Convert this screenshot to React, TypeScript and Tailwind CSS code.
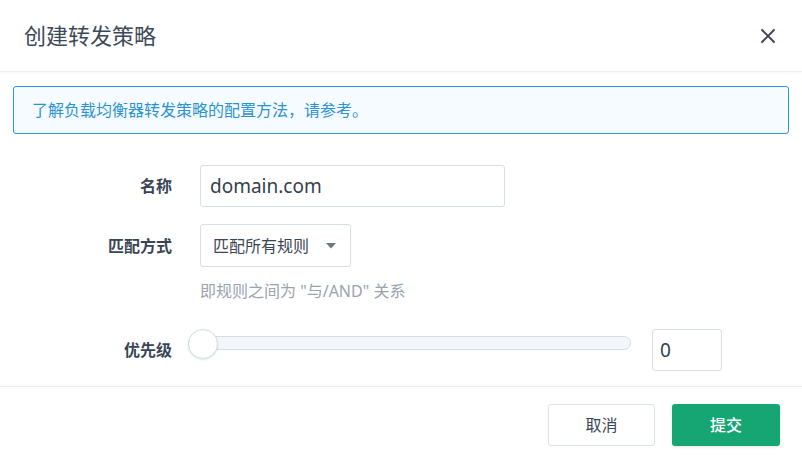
import React from 'react'

const FONT = { fontFamily: '"Noto Sans", "Noto Sans CJK SC", sans-serif' }

function CloseIcon() {
  return (
    <svg width="16" height="16" viewBox="0 0 16 16" fill="none">
      <path d="M2 2 L14 14 M14 2 L2 14" stroke="#3b4757" strokeWidth="1.9" strokeLinecap="round" />
    </svg>
  )
}

function Label({ children }: { children: React.ReactNode }) {
  return (
    <div className="flex h-[42px] w-[159px] shrink-0 items-center justify-end text-[16px] font-bold text-[#394555]">
      {children}
    </div>
  )
}

export default function App() {
  return (
    <div className="flex h-[459px] w-[802px] flex-col bg-white" style={FONT}>
      {/* Header */}
      <div className="relative z-10 flex h-[72px] shrink-0 items-center justify-between border-b border-[#eceff2] pl-6 pr-[26px] shadow-[0_1px_3px_rgba(0,0,0,0.04)]">
        <h1 className="text-[22px] font-normal text-[#3d4959]">创建转发策略</h1>
        <CloseIcon />
      </div>

      <div className="px-[13px]">
        {/* Info */}
        <div className="mt-[14px] flex h-[48px] items-center rounded-[3px] border border-[#2a9ae0] bg-[#f5fbff] px-[18px] text-[16px] text-[#2b93d4]">
          了解负载均衡器转发策略的配置方法，请参考。
        </div>

        {/* Form */}
        <div className="mt-[31px]">
          <div className="flex items-center">
            <Label>名称</Label>
            <div className="ml-[28px] flex h-[42px] w-[305px] items-center rounded-[3px] border border-[#d6dee7] pl-[9px] text-[19px] text-[#333f4d]">
              domain.com
            </div>
          </div>

          <div className="mt-[17px] flex items-center">
            <Label>匹配方式</Label>
            <div className="ml-[28px] flex h-[43px] w-[151px] items-center justify-between rounded-[3px] border border-[#d6dee7] pl-[12px] pr-[14px] text-[16px] text-[#3a4655]">
              <span>匹配所有规则</span>
              <svg width="10" height="6" viewBox="0 0 10 6">
                <path d="M0 0 H10 L5 5.5 Z" fill="#6b7785" />
              </svg>
            </div>
          </div>
          <div className="ml-[187px] mt-[13px] text-[16px] leading-[22px] text-[#9aa4af]">
            即规则之间为 "与/AND" 关系
          </div>

          <div className="mt-[27px] flex items-start">
            <Label>优先级</Label>
            <div className="relative ml-[16px] h-[30px] w-[443px]">
              <div className="mt-[7px] h-[14px] rounded-full border border-[#d5dde7] bg-[#f3f6fa]" />
              <div className="absolute left-0 top-0 h-[30px] w-[30px] rounded-full border border-[#d3dbe4] bg-white shadow-[0_1px_2px_rgba(22,166,115,0.18)]" />
            </div>
            <div className="ml-[21px] flex h-[42px] w-[70px] items-center rounded-[3px] border border-[#d6dee7] pl-[7px] text-[19px] text-[#333f4d]">
              0
            </div>
          </div>
        </div>
      </div>

      {/* Footer */}
      <div className="mt-[15px] flex justify-end gap-[17px] border-t border-[#eceff2] pb-[13px] pl-6 pr-[22px] pt-[17px] shadow-[0_-1px_2px_rgba(0,0,0,0.02)]">
        <button className="h-[42px] w-[107px] rounded-[3px] border border-[#dbe2e9] bg-white text-[16px] text-[#3a4655]">
          取消
        </button>
        <button className="h-[42px] w-[108px] rounded-[3px] bg-[#16a673] text-[16px] font-medium text-white shadow-[0_1px_3px_rgba(0,0,0,0.12)]">
          提交
        </button>
      </div>
    </div>
  )
}
